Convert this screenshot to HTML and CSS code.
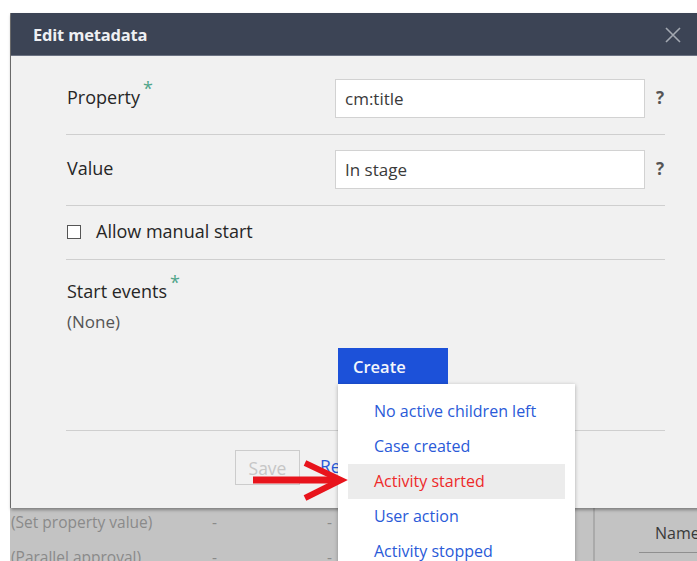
FILE: index.html
```html
<!DOCTYPE html>
<html lang="en">
<head>
<meta charset="utf-8">
<title>Edit metadata</title>
<link rel="stylesheet" href="styles.css">
</head>
<body>
<div class="screen">
  <div class="page-edge"></div>
  <div class="dialog">
    <div class="dlg-head">
      <span class="dlg-title">Edit metadata</span>
      <svg class="dlg-close" width="16" height="16" viewBox="0 0 16 16"><path d="M1 1 L15 15 M15 1 L1 15" stroke="#a3a8b1" stroke-width="1.6" fill="none"/></svg>
    </div>
    <div class="dlg-body">
      <div class="field">
        <span class="field-label">Property<span class="req">*</span></span>
        <div class="field-input">cm:title</div>
        <span class="help">?</span>
      </div>
      <div class="field field-next">
        <span class="field-label">Value</span>
        <div class="field-input">In stage</div>
        <span class="help">?</span>
      </div>
      <div class="check-row">
        <span class="checkbox"></span>
        <span class="check-label">Allow manual start</span>
      </div>
      <div class="events">
        <div class="field-label">Start events<span class="req">*</span></div>
        <div class="none">(None)</div>
        <div class="create-wrap">
          <button class="create" type="button">Create</button>
          <ul class="menu">
            <li class="menu-item">No active children left</li>
            <li class="menu-item">Case created</li>
            <li class="menu-item is-hover">Activity started</li>
            <li class="menu-item">User action</li>
            <li class="menu-item">Activity stopped</li>
          </ul>
        </div>
      </div>
      <div class="footer">
        <button class="save" type="button">Save</button>
        <a class="reset">Reset</a>
      </div>
    </div>
  </div>
  <div class="under">
    <div class="under-rows">
      <div class="under-row"><span class="c1">(Set property value)</span><span class="c2">-</span><span class="c3">-</span></div>
      <div class="under-row"><span class="c1">(Parallel approval)</span><span class="c2">-</span><span class="c3">-</span></div>
    </div>
    <div class="under-side">
      <span class="under-name">Name</span>
    </div>
  </div>
  <svg class="arrow" width="100" height="42" viewBox="0 0 100 42">
    <path d="M2 20 L88 20" stroke="#e8141c" stroke-width="7" fill="none"/>
    <path d="M54 3 L90 20 L54 38" stroke="#e8141c" stroke-width="6" fill="none" stroke-linejoin="miter"/>
  </svg>
</div>
</body>
</html>
```

FILE: styles.css
```css
html, body {
  margin: 0;
  padding: 0;
  background: #ffffff;
}

body {
  font-family: "Open Sans", "Liberation Sans", sans-serif;
  color: #2b2b2b;
}

.screen {
  position: relative;
  width: 697px;
  height: 561px;
  overflow: hidden;
  padding-top: 13px;
  box-sizing: border-box;
}

.page-edge {
  position: absolute;
  left: 10px;
  top: 13px;
  width: 1px;
  height: 495px;
  background: #7a7a7a;
}

/* dialog */
.dialog {
  position: relative;
  z-index: 2;
  margin-left: 11px;
  width: 700px;
  height: 495px;
  background: #f1f1f1;
  box-shadow: 0 2px 3px rgba(0, 0, 0, 0.35);
  display: flex;
  flex-direction: column;
}

.dlg-head {
  height: 42px;
  background: #3c4455;
  border-bottom: 1px solid #6b7282;
  display: flex;
  align-items: center;
  padding-left: 22px;
  padding-right: 30px;
  box-sizing: content-box;
}

.dlg-title {
  color: #eef0f3;
  font-weight: 700;
  font-size: 16.5px;
  letter-spacing: -0.2px;
  flex: 1;
}

.dlg-close {
  margin-top: 1px;
}

.dlg-body {
  padding-left: 55px;
  width: 599px;
  display: flex;
  flex-direction: column;
}

.field {
  display: flex;
  align-items: center;
  padding: 23px 0 16px;
  border-bottom: 1px solid #cfcfcf;
}

.field-next {
  padding-top: 15px;
}

.field-label {
  font-size: 18px;
  line-height: 24px;
  padding-left: 1px;
  width: 268px;
  color: #262626;
  margin-top: -3px;
}

.req {
  color: #4fa58a;
  font-size: 18px;
  position: relative;
  top: -9px;
  margin-left: 3px;
}

.field-input {
  width: 299px;
  height: 37px;
  border: 1px solid #d2d2d2;
  background: #ffffff;
  padding-left: 9px;
  font-size: 17px;
  line-height: 37px;
  color: #3a3a3a;
}

.help {
  margin-left: 11px;
  font-size: 17px;
  font-weight: 700;
  color: #555;
  margin-top: -2px;
}

.check-row {
  height: 53px;
  display: flex;
  align-items: center;
  border-bottom: 1px solid #cfcfcf;
}

.checkbox {
  width: 12px;
  height: 12px;
  border: 1.5px solid #555;
  background: #fff;
  margin-left: 1px;
  margin-right: 15px;
  margin-top: -2px;
}

.check-label {
  font-size: 18px;
  color: #262626;
  margin-top: -3px;
}

.events {
  padding: 20px 0 46px;
  border-bottom: 1px solid #cfcfcf;
}

.events .field-label {
  width: auto;
  line-height: 22px;
  margin-top: 0;
}

.none {
  margin-top: 9px;
  padding-left: 1px;
  font-size: 17px;
  line-height: 22px;
  color: #555;
}

.create-wrap {
  position: relative;
  margin-top: 15px;
  margin-left: 272px;
  width: 110px;
}

.create {
  display: block;
  width: 110px;
  height: 36px;
  border: none;
  background: #1c51d9;
  color: #f4f6fb;
  font-family: inherit;
  font-size: 16.5px;
  font-weight: 600;
  text-align: left;
  padding-left: 15px;
}

.menu {
  position: absolute;
  z-index: 5;
  left: 0;
  top: 36px;
  width: 237px;
  height: 200px;
  margin: 0;
  padding: 10px 10px 0;
  box-sizing: border-box;
  list-style: none;
  background: #ffffff;
  box-shadow: 0 1px 4px rgba(0, 0, 0, 0.3);
}

.menu-item {
  height: 35px;
  line-height: 34px;
  padding-left: 26px;
  font-size: 16px;
  color: #2a5ad8;
}

.menu-item.is-hover {
  background: #ececec;
  color: #ee2a2a;
}

.footer {
  padding-top: 19px;
  display: flex;
  align-items: center;
}

.save {
  margin-left: 169px;
  width: 65px;
  height: 35px;
  border: 1px solid #cccccc;
  background: #f1f1f1;
  color: #c6c6c6;
  font-family: inherit;
  font-size: 17.5px;
  padding: 0;
}

.reset {
  margin-left: 20px;
  color: #2a5ad8;
  font-size: 17.5px;
  margin-top: -3px;
}

/* page content behind the dialog */
.under {
  margin-left: 10px;
  height: 53px;
  background: #c3c3c3;
  display: flex;
}

.under-rows {
  width: 565px;
  padding-top: 4px;
}

.under-row {
  display: flex;
  height: 35px;
  line-height: 20px;
  font-size: 15.5px;
  color: #8a8a8a;
}

.c1 {
  width: 201px;
  padding-left: 1px;
}

.c2 {
  width: 115px;
}

.under-side {
  flex: 1;
  margin-left: 18px;
  border-left: 2px solid #aaaaaa;
  position: relative;
}

.under-name {
  position: absolute;
  left: 60px;
  top: 14px;
  font-size: 16px;
  color: #3a3a3a;
  width: 70px;
}

.under-name::after {
  content: "";
  position: absolute;
  left: -16px;
  top: 30px;
  width: 90px;
  height: 1px;
  background: #8f8f8f;
}

.arrow {
  position: absolute;
  z-index: 6;
  left: 251px;
  top: 460px;
}
```
